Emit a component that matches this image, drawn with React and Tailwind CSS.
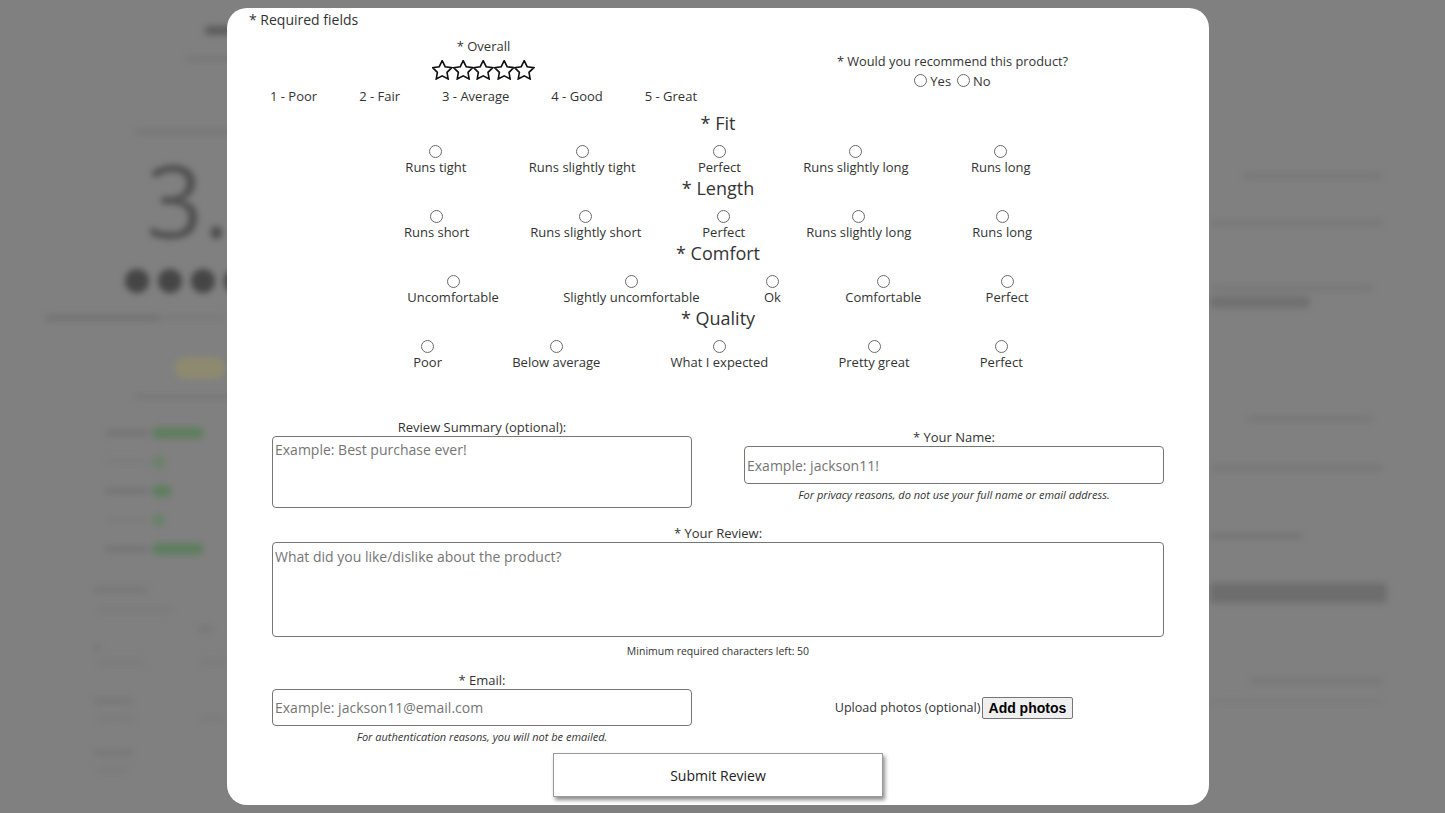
import React from 'react';

const attributes = [
  { title: 'Fit', options: ['Runs tight', 'Runs slightly tight', 'Perfect', 'Runs slightly long', 'Runs long'] },
  { title: 'Length', options: ['Runs short', 'Runs slightly short', 'Perfect', 'Runs slightly long', 'Runs long'] },
  { title: 'Comfort', options: ['Uncomfortable', 'Slightly uncomfortable', 'Ok', 'Comfortable', 'Perfect'] },
  { title: 'Quality', options: ['Poor', 'Below average', 'What I expected', 'Pretty great', 'Perfect'] },
];

const ratings = ['1 - Poor', '2 - Fair', '3 - Average', '4 - Good', '5 - Great'];

function Radio({ name, className = '' }) {
  return (
    <input
      type="radio"
      name={name}
      className={`appearance-none m-0 block w-[13px] h-[13px] rounded-full border border-[#6b6b6b] bg-white ${className}`}
    />
  );
}

function Star() {
  return (
    <svg viewBox="1.4 1.4 21.2 20.6" className="w-[20.4px] h-[20px]" fill="none" stroke="#111" strokeWidth="1.7">
      <path d="M12 2l3.09 6.26L22 9.27l-5 4.87 1.18 6.88L12 17.77l-6.18 3.25L7 14.14 2 9.27l6.91-1.01L12 2z" />
    </svg>
  );
}

function BackgroundPage() {
  return (
    <div className="flex blur-[3px]">
      {/* left column of the product page */}
      <div className="w-[227px] flex flex-col">
        <div className="mt-[26px] ml-[205px] w-[30px] h-[9px] rounded bg-[#5c5c5c]" />
        <div className="mt-[21px] ml-[185px] w-[50px] h-[6px] rounded bg-[#787878]" />
        <div className="mt-[67px] ml-[135px] w-[100px] h-[6px] rounded bg-[#777]" />
        <div className="mt-[22px] ml-[146px] text-[100px] leading-[84px] text-[#4f4f4f] font-['Open_Sans',sans-serif] whitespace-nowrap">3.0</div>
        <div className="mt-[28px] ml-[125px] flex gap-[9px]">
          <div className="w-[24px] h-[24px] rounded-full bg-[#454545] shrink-0" />
          <div className="w-[24px] h-[24px] rounded-full bg-[#454545] shrink-0" />
          <div className="w-[24px] h-[24px] rounded-full bg-[#454545] shrink-0" />
          <div className="w-[24px] h-[24px] rounded-full bg-[#454545] shrink-0" />
        </div>
        <div className="mt-[22px] ml-[45px] flex">
          <div className="w-[115px] h-[6px] rounded bg-[#727272]" />
          <div className="w-[67px] h-[6px] rounded bg-[#7a7a7a]" />
        </div>
        <div className="mt-[36px] ml-[175px] w-[50px] h-[22px] rounded-full bg-[#8e8a70]" />
        <div className="mt-[15px] ml-[135px] w-[100px] h-[5px] rounded bg-[#777]" />
        <div className="mt-[28px] ml-[105px] flex flex-col gap-[17px]">
          <div className="flex items-center gap-[3px]">
            <div className="w-[45px] h-[6px] rounded bg-[#747474]" />
            <div className="w-[50px] h-[12px] rounded bg-[#5f7e5f]" />
          </div>
          <div className="flex items-center gap-[3px]">
            <div className="w-[45px] h-[6px] rounded bg-[#7c7c7c]" />
            <div className="w-[12px] h-[12px] rounded bg-[#6a816a]" />
          </div>
          <div className="flex items-center gap-[3px]">
            <div className="w-[45px] h-[6px] rounded bg-[#747474]" />
            <div className="w-[18px] h-[12px] rounded bg-[#5f7e5f]" />
          </div>
          <div className="flex items-center gap-[3px]">
            <div className="w-[45px] h-[6px] rounded bg-[#7c7c7c]" />
            <div className="w-[12px] h-[12px] rounded bg-[#6a816a]" />
          </div>
          <div className="flex items-center gap-[3px]">
            <div className="w-[45px] h-[6px] rounded bg-[#747474]" />
            <div className="w-[50px] h-[12px] rounded bg-[#5f7e5f]" />
          </div>
        </div>
        <div className="mt-[32px] ml-[93px] w-[55px] h-[6px] rounded bg-[#777]" />
        <div className="mt-[14px] ml-[97px] w-[75px] h-[6px] rounded bg-[#7b7b7b]" />
        <div className="mt-[13px] ml-[197px] w-[16px] h-[6px] rounded bg-[#777]" />
        <div className="mt-[12px] ml-[93px] w-[8px] h-[6px] rounded bg-[#777]" />
        <div className="mt-[9px] ml-[97px] flex gap-[53px]">
          <div className="w-[50px] h-[6px] rounded bg-[#7b7b7b]" />
          <div className="w-[30px] h-[6px] rounded bg-[#7b7b7b]" />
        </div>
        <div className="mt-[33px] ml-[93px] w-[40px] h-[6px] rounded bg-[#777]" />
        <div className="mt-[12px] ml-[97px] flex gap-[63px]">
          <div className="w-[40px] h-[6px] rounded bg-[#7b7b7b]" />
          <div className="w-[30px] h-[6px] rounded bg-[#7b7b7b]" />
        </div>
        <div className="mt-[28px] ml-[93px] w-[40px] h-[6px] rounded bg-[#777]" />
        <div className="mt-[12px] ml-[97px] w-[30px] h-[6px] rounded bg-[#7b7b7b]" />
      </div>

      <div className="w-[982px] shrink-0" />

      {/* right column of the product page */}
      <div className="w-[236px] flex flex-col">
        <div className="mt-[173px] ml-[34px] w-[140px] h-[6px] rounded bg-[#777]" />
        <div className="mt-[41px] ml-[1px] w-[173px] h-[6px] rounded bg-[#777]" />
        <div className="mt-[59px] ml-[1px] w-[163px] h-[6px] rounded bg-[#777]" />
        <div className="mt-[5px] ml-[1px] w-[100px] h-[12px] rounded bg-[#707070]" />
        <div className="mt-[108px] ml-[38px] w-[126px] h-[6px] rounded bg-[#777]" />
        <div className="mt-[43px] ml-[1px] w-[173px] h-[6px] rounded bg-[#777]" />
        <div className="mt-[62px] ml-[1px] w-[93px] h-[6px] rounded bg-[#747474]" />
        <div className="mt-[44px] ml-[1px] w-[177px] h-[20px] rounded bg-[#6d6d6d]" />
        <div className="mt-[75px] ml-[41px] w-[133px] h-[6px] rounded bg-[#777]" />
        <div className="mt-[15px] ml-[1px] w-[173px] h-[6px] rounded bg-[#7c7c7c]" />
      </div>
    </div>
  );
}

export default function App() {
  return (
    <div className="relative w-[1445px] h-[813px] overflow-hidden bg-[#808080] font-['Open_Sans',sans-serif] text-[#333]">
      <BackgroundPage />

      {/* Review modal */}
      <div className="absolute inset-0 flex pl-[227px] pt-[8px]">
        <div className="w-[982px] h-[797px] bg-white rounded-[20px] overflow-hidden">
          <div className="pl-[22px] pt-[2px] text-[14px] leading-[20px]">* Required fields</div>

          {/* overall + recommend */}
          <div className="grid grid-cols-2 px-[22px]">
            <div className="flex flex-col items-center">
              <div className="mt-[7px] text-[13px] leading-[18px]">* Overall</div>
              <div className="mt-[5px] flex gap-[0.1px]">
                <Star />
                <Star />
                <Star />
                <Star />
                <Star />
              </div>
              <div className="mt-[8px] flex justify-center gap-[42px] text-[13px] leading-[17px]">
                {ratings.map((r) => (
                  <span key={r}>{r}</span>
                ))}
              </div>
            </div>
            <div className="flex flex-col items-center">
              <div className="mt-[22px] text-[12.8px] leading-[18px]">* Would you recommend this product?</div>
              <div className="flex items-center text-[13px] leading-[17px]">
                <Radio name="recommend" className="mr-[3px]" />
                <span className="mt-[3px]">Yes</span>
                <Radio name="recommend" className="ml-[6px] mr-[3px]" />
                <span className="mt-[3px]">No</span>
              </div>
            </div>
          </div>

          {/* attribute ratings */}
          <div className="mt-[6px] flex flex-col">
            {attributes.map((a) => (
              <div key={a.title} className="flex flex-col items-center h-[65px]">
                <div className="text-[18px] leading-[24px]">* {a.title}</div>
                <div className="w-[750px] flex justify-evenly">
                  {a.options.map((o) => (
                    <label key={o} className="flex flex-col items-center">
                      <Radio name={a.title} className="mt-[10px] mb-[1px]" />
                      <span className="text-[13px] leading-[17px] whitespace-nowrap">{o}</span>
                    </label>
                  ))}
                </div>
              </div>
            ))}
          </div>

          {/* summary + name */}
          <div className="mt-[48px] px-[45px] grid grid-cols-[420px_420px] gap-x-[52px] items-start">
            <div className="flex flex-col items-center">
              <div className="text-[13px] leading-[17px]">Review Summary (optional):</div>
              <textarea
                placeholder="Example: Best purchase ever!"
                className="w-full h-[72px] resize-none border border-[#767676] rounded-[4px] px-[2px] pt-[3px] text-[14px] leading-[20px] placeholder:text-[#757575] outline-none"
              />
            </div>
            <div className="mt-[10px] flex flex-col items-center">
              <div className="text-[13px] leading-[17px]">* Your Name:</div>
              <input
                placeholder="Example: jackson11!"
                className="w-full h-[38px] border border-[#767676] rounded-[4px] px-[2px] text-[14px] placeholder:text-[#757575] outline-none"
              />
              <div className="mt-[3px] text-[11px] leading-[15px] italic">
                For privacy reasons, do not use your full name or email address.
              </div>
            </div>
          </div>

          {/* review body */}
          <div className="mt-[17px] px-[45px] flex flex-col items-center">
            <div className="text-[13px] leading-[17px]">* Your Review:</div>
            <textarea
              placeholder="What did you like/dislike about the product?"
              className="w-full h-[95px] resize-none border border-[#767676] rounded-[4px] px-[2px] pt-[4px] text-[14px] leading-[20px] placeholder:text-[#757575] outline-none"
            />
            <div className="mt-[7px] text-[10.5px] leading-[15px]">Minimum required characters left: 50</div>
          </div>

          {/* email + photos */}
          <div className="mt-[13px] px-[45px] grid grid-cols-[420px_420px] gap-x-[52px] items-center">
            <div className="flex flex-col items-center">
              <div className="text-[13px] leading-[17px]">* Email:</div>
              <input
                placeholder="Example: jackson11@email.com"
                className="w-full h-[37px] border border-[#767676] rounded-[4px] px-[2px] text-[14px] placeholder:text-[#757575] outline-none"
              />
              <div className="mt-[3px] text-[11px] leading-[15px] italic">
                For authentication reasons, you will not be emailed.
              </div>
            </div>
            <div className="flex items-center justify-center">
              <span className="text-[12.6px] leading-[18px]">Upload photos (optional)</span>
              <button className="ml-[1px] h-[22px] px-[6px] border border-[#767676] rounded-[2px] bg-[#efefef] font-['Liberation_Sans',Arial,sans-serif] font-bold text-[14px] leading-[18px] text-black">
                Add photos
              </button>
            </div>
          </div>

          {/* submit */}
          <div className="mt-[9px] flex justify-center">
            <button className="w-[330px] h-[44px] bg-white border border-[#9a9a9a] shadow-[2px_3px_4px_rgba(0,0,0,0.45)] text-[14px] text-[#222]">
              Submit Review
            </button>
          </div>
        </div>
      </div>
    </div>
  );
}
